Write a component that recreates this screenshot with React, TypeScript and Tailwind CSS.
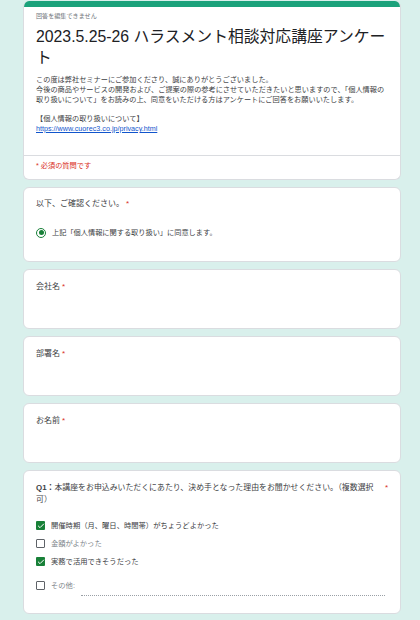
import { Check } from "lucide-react";

const font = "font-['Liberation_Sans','Noto_Sans_CJK_JP',sans-serif]";

function Req() {
  return <span className="text-[#d93025] ml-[2px]">*</span>;
}

function Card({ children, className = "" }: { children: React.ReactNode; className?: string }) {
  return (
    <div className={`bg-white border border-[#dadce0] rounded-[6px] ${className}`}>{children}</div>
  );
}

function TextQuestion({ label }: { label: string }) {
  return (
    <Card className="h-[60px] px-[12px] pt-[12px]">
      <div className="text-[8px] leading-[10px] text-[#3c4043]">
        {label}
        <Req />
      </div>
    </Card>
  );
}

function CheckOption({ label, checked }: { label: string; checked: boolean }) {
  return (
    <div className="flex items-center gap-[6px] h-[10px]">
      {checked ? (
        <div className="w-[9px] h-[9px] rounded-[1px] bg-[#188038] flex items-center justify-center">
          <Check size={8} strokeWidth={3} className="text-white" />
        </div>
      ) : (
        <div className="w-[9px] h-[9px] rounded-[1px] border border-[#5f6368]" />
      )}
      <span className={`text-[7.3px] leading-[10px] ${checked ? "text-[#3c4043]" : "text-[#80868b]"}`}>
        {label}
      </span>
    </div>
  );
}

export default function App() {
  // Google Forms style survey page
  return (
    <div className={`w-[420px] h-[620px] overflow-hidden bg-[#d9f0ec] pt-[1px] ${font}`}>
      <div className="ml-[23px] w-[378px] flex flex-col gap-[7px]">
        <div className="bg-white border border-[#dadce0] border-t-0 rounded-[6px] overflow-hidden">
          <div className="h-[6px] bg-[#1ba27b]" />
          <div className="px-[12px] pt-[4px]">
            <div className="text-[6.1px] leading-[10px] text-[#70757a]">回答を編集できません</div>
            <h1 className="mt-[5px] text-[15.8px] leading-[21px] text-[#202124]">
              2023.5.25-26 ハラスメント相談対応講座アンケート
            </h1>
            <div className="mt-[7px] text-[7.2px] leading-[9.8px] text-[#3c4043]">
              この度は弊社セミナーにご参加くださり、誠にありがとうございました。
              <br />
              今後の商品やサービスの開発および、ご提案の際の参考にさせていただきたいと思いますので、「個人情報の取り扱いについて」をお読みの上、同意をいただける方はアンケートにご回答をお願いいたします。
              <br />
              <br />
              【個人情報の取り扱いについて】
              <br />
              <a className="text-[#1155cc] underline">https://www.cuorec3.co.jp/privacy.html</a>
            </div>
          </div>
          <div className="mt-[21px] border-t border-[#dadce0] px-[12px] pt-[5px] pb-[8px]">
            <div className="text-[7.2px] leading-[10px] text-[#d93025]">* 必須の質問です</div>
          </div>
        </div>

        <Card className="px-[12px] pt-[11px] pb-[23px]">
          <div className="text-[8px] leading-[10px] text-[#3c4043]">
            以下、ご確認ください。
            <Req />
          </div>
          <div className="mt-[19px] flex items-center gap-[6px]">
            <div className="w-[10px] h-[10px] rounded-full border-[1.5px] border-[#188038] flex items-center justify-center">
              <div className="w-[5px] h-[5px] rounded-full bg-[#188038]" />
            </div>
            <span className="text-[7.2px] leading-[10px] text-[#3c4043]">
              上記「個人情報に関する取り扱い」に同意します。
            </span>
          </div>
        </Card>

        <TextQuestion label="会社名" />
        <TextQuestion label="部署名" />
        <TextQuestion label="お名前" />

        <Card className="px-[12px] pt-[11px] pb-[22px]">
          <div className="flex justify-between">
            <p className="w-[346px] text-[7.9px] leading-[12px] text-[#3c4043]">
              <b>Q1：</b>本講座をお申込みいただくにあたり、決め手となった理由をお聞かせください。（複数選択可）
            </p>
            <span className="text-[8px] leading-[12px] text-[#d93025]">*</span>
          </div>
          <div className="mt-[15px] flex flex-col gap-[8px]">
            <CheckOption label="開催時期（月、曜日、時間帯）がちょうどよかった" checked />
            <CheckOption label="金額がよかった" checked={false} />
            <CheckOption label="実務で活用できそうだった" checked />
          </div>
          <div className="mt-[14px] flex items-center gap-[6px] h-[10px]">
            <div className="w-[9px] h-[9px] rounded-[1px] border border-[#5f6368]" />
            <span className="text-[7.3px] leading-[10px] text-[#80868b]">その他:</span>
            <div className="flex-1 mr-[3px] self-end translate-y-[5px] border-b border-dotted border-[#9aa0a6]" />
          </div>
        </Card>
      </div>
    </div>
  );
}
